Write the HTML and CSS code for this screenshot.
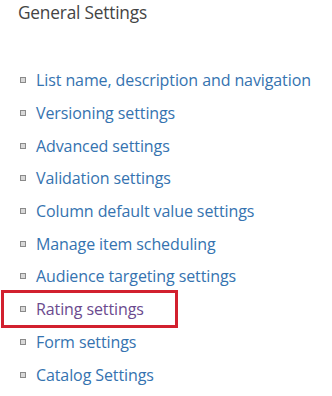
FILE: index.html
```html
<!DOCTYPE html>
<html lang="en">
<head>
  <meta charset="UTF-8">
  <title>General Settings</title>
  <link rel="stylesheet" href="styles.css">
</head>
<body>
  <div class="settings">
    <h2 class="settings-title">General Settings</h2>
    <ul class="settings-list">
      <li><a href="#">List name, description and navigation</a></li>
      <li><a href="#">Versioning settings</a></li>
      <li><a href="#">Advanced settings</a></li>
      <li><a href="#">Validation settings</a></li>
      <li><a href="#">Column default value settings</a></li>
      <li><a href="#">Manage item scheduling</a></li>
      <li><a href="#">Audience targeting settings</a></li>
      <li class="highlight"><a href="#" class="visited">Rating settings</a></li>
      <li><a href="#">Form settings</a></li>
      <li><a href="#">Catalog Settings</a></li>
    </ul>
  </div>
</body>
</html>
```

FILE: styles.css
```css
/* base */
body {
  margin: 0;
  background: #fff;
  font-family: "Open Sans", "Liberation Sans", sans-serif;
}

.settings {
  padding: 2px 0 0 0;
}

.settings-title {
  margin: 0 0 0 18px;
  font-size: 17.3px;
  font-weight: normal;
  color: #444;
  line-height: 22px;
  letter-spacing: -0.2px;
}

/* list of links */
.settings-list {
  list-style: none;
  margin: 40px 0 0 0;
  padding: 0;
}

.settings-list li {
  position: relative;
  display: flex;
  align-items: center;
  height: 32.7px;
  padding-left: 20px;
  box-sizing: border-box;
}

.settings-list li::before {
  content: "";
  width: 4px;
  height: 4px;
  border: 1px solid #8a8a8a;
  background: #d8d8d8;
  margin-right: 10px;
  flex-shrink: 0;
}

.settings-list a {
  font-size: 16px;
  color: #3573b0;
  text-decoration: none;
  white-space: nowrap;
  letter-spacing: -0.1px;
}

.settings-list a.visited {
  color: #6b4a8e;
}

/* red frame round the highlighted row */
.settings-list li.highlight::after {
  content: "";
  position: absolute;
  left: 1px;
  top: -3px;
  width: 177px;
  bottom: -2px;
  border: 3px solid #d2202f;
  box-sizing: border-box;
}
```
